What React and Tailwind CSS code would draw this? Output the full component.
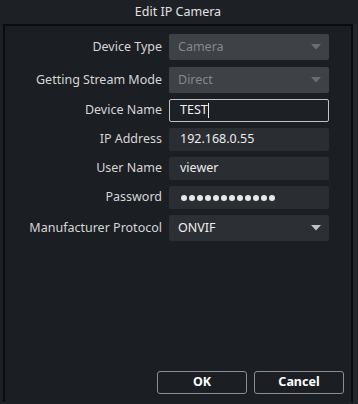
import React from "react";

function Arrow({ color }) {
  return (
    <svg width="10" height="6" viewBox="0 0 10 6" className="shrink-0">
      <path d="M0 0 L10 0 L5 5.5 Z" fill={color} />
    </svg>
  );
}

function Row({ label, children, h }) {
  return (
    <div className="flex items-center" style={{ height: h }}>
      <div className="w-[157px] text-right text-[12.5px] text-[#d6d6d6] whitespace-nowrap">{label}</div>
      <div className="ml-[7px] w-[160px] h-full">{children}</div>
    </div>
  );
}

export default function App() {
  return (
    <div
      className="w-[358px] h-[404px] bg-[#1d2024] flex flex-col overflow-hidden"
      style={{ fontFamily: '"Noto Sans", "Open Sans", sans-serif' }}
    >
      <div className="h-[24px] flex items-center justify-center text-[12.5px] text-[#e2e2e2] pr-[2px]">
        Edit IP Camera
      </div>
      <div className="flex flex-1">
        <div className="ml-[3px] w-[350px] h-[378px] border-l-2 border-t-2 border-r-2 border-[#0a0b0d] bg-[#1b1e22] flex flex-col pt-[8px]">
          <div className="flex flex-col">
            <Row label="Device Type" h={26}>
              <div className="h-full rounded-[2px] bg-[#3e4146] flex items-center justify-between pl-[9px] pr-[8px] text-[12.5px] text-[#85888c]">
                <span>Camera</span>
                <Arrow color="#6a6d72" />
              </div>
            </Row>
            <div className="h-[7px]" />
            <Row label="Getting Stream Mode" h={26}>
              <div className="h-full rounded-[2px] bg-[#3e4146] flex items-center justify-between pl-[9px] pr-[8px] text-[12.5px] text-[#85888c]">
                <span>Direct</span>
                <Arrow color="#6a6d72" />
              </div>
            </Row>
            <div className="h-[6px]" />
            <Row label="Device Name" h={23}>
              <div className="h-full rounded-[2px] border border-[#bfc1c4] bg-[#1d2024] flex items-center pl-[10px] text-[12.5px] text-[#f0f0f0]">
                <span>TEST</span>
                <span className="w-px h-[15px] bg-[#f0f0f0]" />
              </div>
            </Row>
            <div className="h-[6px]" />
            <Row label="IP Address" h={23}>
              <div className="h-full rounded-[2px] bg-[#2a2d32] flex items-center pl-[11px] text-[12.5px] text-[#ececec]">
                192.168.0.55
              </div>
            </Row>
            <div className="h-[6px]" />
            <Row label="User Name" h={23}>
              <div className="h-full rounded-[2px] bg-[#2a2d32] flex items-center pl-[11px] text-[12.5px] text-[#ececec]">
                viewer
              </div>
            </Row>
            <div className="h-[6px]" />
            <Row label="Password" h={23}>
              <div className="h-full rounded-[2px] bg-[#2a2d32] flex items-center pl-[12px] gap-[2px]">
                {Array.from({ length: 12 }).map((_, i) => (
                  <span key={i} className="w-[6px] h-[6px] rounded-full bg-[#e8e8e8]" />
                ))}
              </div>
            </Row>
            <div className="h-[6px]" />
            <Row label="Manufacturer Protocol" h={26}>
              <div className="h-full rounded-[2px] bg-[#2c2f34] flex items-center justify-between pl-[9px] pr-[8px] text-[12.5px] text-[#f0f0f0]">
                <span>ONVIF</span>
                <Arrow color="#bfc1c4" />
              </div>
            </Row>
          </div>
          <div className="flex-1" />
          <div className="flex justify-end gap-[7px] pr-[7px] pb-[8px]">
            <button className="w-[90px] h-[23px] rounded-[3px] border border-[#8b8d90] text-[12.5px] font-bold text-white flex items-center justify-center">
              OK
            </button>
            <button className="w-[90px] h-[23px] rounded-[3px] border border-[#8b8d90] text-[12.5px] font-bold text-white flex items-center justify-center">
              Cancel
            </button>
          </div>
        </div>
        <div className="w-[5px] bg-[#24272b]" />
      </div>
    </div>
  );
}
